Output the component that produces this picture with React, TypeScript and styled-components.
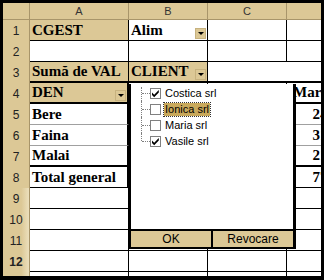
import styled, { createGlobalStyle } from "styled-components";

const TAN = "#dcc896";
const TAN_DARK = "#a8956a";

const GlobalStyle = createGlobalStyle`
  html, body {
    margin: 0;
    padding: 0;
    background: #000;
  }
`;

type Line = "thin" | "thick" | "light" | "none";

const lineCss = (l: Line = "thin") =>
  l === "thick" ? "2px solid #000" : l === "light" ? "1px solid #a0a0a0" : l === "none" ? "0" : "1px solid #000";

export default function App() {
  return (
    <>
      <GlobalStyle />
      <Frame>
        <Sheet>
          <Corner />
          <ColHead>A</ColHead>
          <ColHead>B</ColHead>
          <ColHead>C</ColHead>
          <ColHead>D</ColHead>

          <RowHead>1</RowHead>
          <Cell $tan>CGEST</Cell>
          <Cell>
            Alim
            <DropBtn />
          </Cell>
          <Cell />
          <Cell />

          <RowHead>2</RowHead>
          <Cell />
          <Cell />
          <Cell />
          <Cell />

          <RowHead>3</RowHead>
          <Cell $tan $bottom="thick">Sumă de VAL</Cell>
          <Cell $tan $bottom="thick">
            CLIENT
            <DropBtn />
          </Cell>
          <Cell $span={2} $bottom="thick" />

          <RowHead>4</RowHead>
          <Cell $tan $bottom="thick" $right="thick">
            DEN
            <DropBtn />
          </Cell>
          <Cell $bottom="thick" />
          <Cell $bottom="thick" />
          <Cell $bottom="thick" $indent={6}>Maria srl</Cell>

          {[
            ["5", "Bere", "245"],
            ["6", "Faina", "312"],
            ["7", "Malai", "218"],
          ].map(([n, den, val], i) => (
            <Row key={n}>
              <RowHead>{n}</RowHead>
              <Cell $right="thick" $bottom={i === 2 ? "thick" : "light"}>{den}</Cell>
              <Cell $bottom="light" />
              <Cell $bottom="light" />
              <Cell $num $bottom={i === 2 ? "thick" : "light"}>{val}</Cell>
            </Row>
          ))}

          <RowHead>8</RowHead>
          <Cell $right="thick">Total general</Cell>
          <Cell />
          <Cell />
          <Cell $num>775</Cell>

          {["9", "10", "11", "12", "13"].map((n) => (
            <Row key={n}>
              <RowHead $active={n === "12"} $lit>{n}</RowHead>
              <Cell />
              <Cell />
              <Cell />
              <Cell />
            </Row>
          ))}
        </Sheet>

        <Popup>
          <List>
            {[
              ["Costica srl", true],
              ["Ionica srl", false],
              ["Maria srl", false],
              ["Vasile srl", true],
            ].map(([label, checked], i) => (
              <Item key={label as string}>
                <Check>
                  {checked && (
                    <svg width="9" height="9" viewBox="0 0 9 9">
                      <path d="M1 3.5 L3.2 5.7 L7.8 1.1 L7.8 3.6 L3.2 8.2 L1 6 Z" fill="#000" />
                    </svg>
                  )}
                </Check>
                <Label $focus={i === 1}>{label as string}</Label>
              </Item>
            ))}
          </List>
          <Buttons>
            <Btn>OK</Btn>
            <Btn>Revocare</Btn>
          </Buttons>
        </Popup>
      </Frame>
    </>
  );
}

const Frame = styled.div`
  position: relative;
  width: 324px;
  height: 280px;
  box-sizing: border-box;
  border: 3px solid #000;
  border-bottom-width: 4px;
  background: #fff;
  overflow: hidden;
`;

const Sheet = styled.div`
  display: grid;
  grid-template-columns: 27px 99px 79px 79px 79px;
  grid-template-rows: 17px repeat(13, 21px);
  width: max-content;
`;

const Row = styled.div`
  display: contents;
`;

const Corner = styled.div`
  background: ${TAN};
  border-right: 1px solid ${TAN_DARK};
  border-bottom: 1px solid ${TAN_DARK};
`;

const ColHead = styled.div`
  background: ${TAN};
  border-right: 1px solid ${TAN_DARK};
  border-bottom: 1px solid ${TAN_DARK};
  display: flex;
  align-items: center;
  justify-content: center;
  font-family: "Liberation Sans", Arial, sans-serif;
  font-size: 11px;
  color: #333;
`;

const RowHead = styled.div<{ $active?: boolean; $lit?: boolean }>`
  background: ${({ $lit }) => ($lit ? `linear-gradient(90deg, ${TAN} 70%, #ece0bd 100%)` : TAN)};
  border-right: 1px solid ${TAN_DARK};
  display: flex;
  align-items: center;
  justify-content: center;
  font-family: "Liberation Sans", Arial, sans-serif;
  font-size: 12px;
  font-weight: ${({ $active }) => ($active ? 700 : 400)};
  color: #222;
`;

const Cell = styled.div<{
  $tan?: boolean;
  $bottom?: Line;
  $right?: Line;
  $span?: number;
  $num?: boolean;
  $indent?: number;
}>`
  grid-column: span ${({ $span }) => $span ?? 1};
  background: ${({ $tan }) => ($tan ? TAN : "#fff")};
  border-right: ${({ $right }) => lineCss($right)};
  border-bottom: ${({ $bottom }) => lineCss($bottom)};
  display: flex;
  align-items: flex-end;
  justify-content: ${({ $num }) => ($num ? "flex-end" : "space-between")};
  padding: 0 ${({ $num }) => ($num ? "30px" : "1px")} 1px ${({ $indent }) => $indent ?? 2}px;
  font-family: "Liberation Serif", "Times New Roman", serif;
  font-weight: 700;
  font-size: 15px;
  line-height: 17px;
  color: #000;
  white-space: nowrap;
  overflow: hidden;
`;

const DropBtn = styled.span`
  flex: none;
  width: 11px;
  height: 11px;
  background: ${TAN};
  border: 1px solid #c7b27f;
  box-sizing: border-box;
  display: flex;
  align-items: center;
  justify-content: center;

  &::after {
    content: "";
    border-left: 3px solid transparent;
    border-right: 3px solid transparent;
    border-top: 3px solid #000;
  }
`;

const Popup = styled.div`
  position: absolute;
  left: 126px;
  top: 81px;
  width: 167px;
  height: 165px;
  box-sizing: border-box;
  background: #fff;
  border: 2px solid #000;
  border-top-width: 0;
  border-right-width: 3px;
  display: flex;
  flex-direction: column;
`;

const List = styled.div`
  flex: 1;
  padding: 1px 0 0 10px;
  font-family: "Liberation Sans", Arial, sans-serif;
  font-size: 11px;
  color: #000;
`;

const Item = styled.div`
  position: relative;
  display: flex;
  align-items: center;
  gap: 3px;
  height: 16px;
  padding-left: 9px;

  &::before {
    content: "";
    position: absolute;
    left: 0;
    top: 0;
    bottom: 0;
    border-left: 1px dotted #808080;
  }
  &:first-child::before {
    top: 2px;
  }
  &:last-child::before {
    bottom: 8px;
  }
  &::after {
    content: "";
    position: absolute;
    left: 1px;
    top: 8px;
    width: 8px;
    border-top: 1px dotted #808080;
  }
`;

const Check = styled.span`
  width: 11px;
  height: 11px;
  box-sizing: border-box;
  border: 1px solid #808080;
  background: #fff;
  display: flex;
  align-items: center;
  justify-content: center;
`;

const Label = styled.span<{ $focus?: boolean }>`
  padding: 0 1px;
  line-height: 13px;
  background: ${({ $focus }) => ($focus ? "#c9a95b" : "transparent")};
  outline: ${({ $focus }) => ($focus ? "1px dotted #333" : "none")};
`;

const Buttons = styled.div`
  display: flex;
  gap: 2px;
  border-top: 2px solid #000;
  background: #000;
`;

const Btn = styled.div`
  flex: 1;
  height: 16px;
  background: ${TAN};
  display: flex;
  align-items: center;
  justify-content: center;
  font-family: "Liberation Sans", Arial, sans-serif;
  font-size: 12px;
  color: #000;
`;
